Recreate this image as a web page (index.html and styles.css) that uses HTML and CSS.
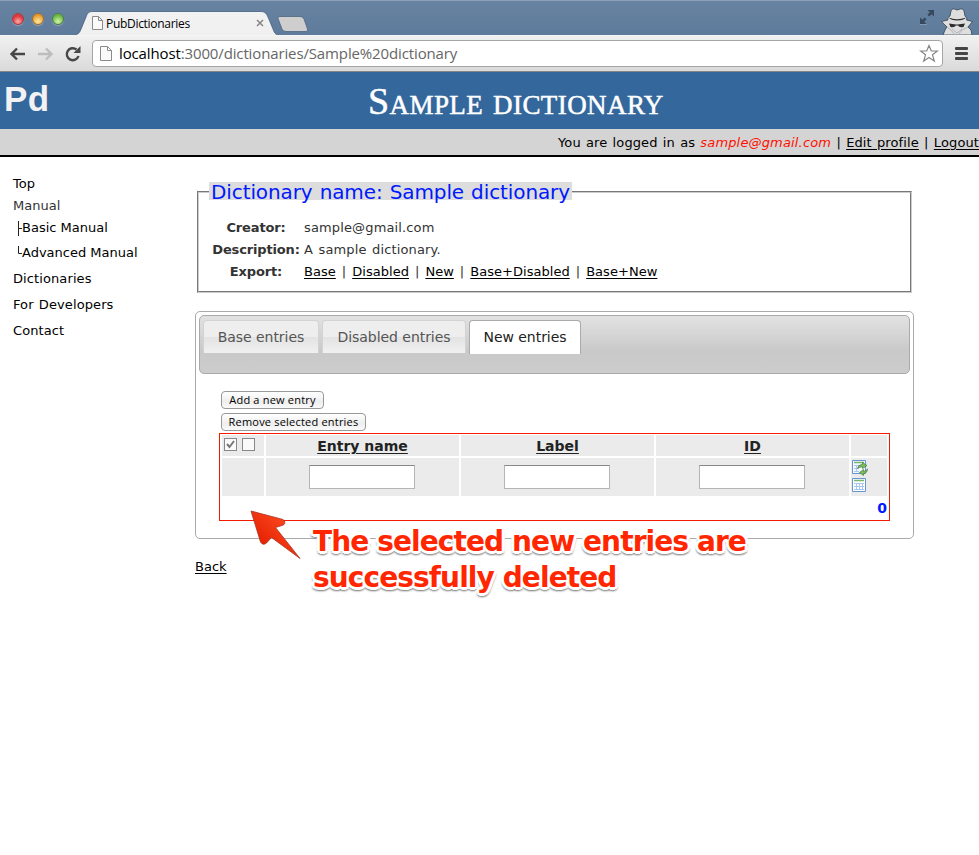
FILE: index.html
```html
<!DOCTYPE html>
<html lang="en">
<head>
<meta charset="utf-8">
<title>PubDictionaries</title>
<link rel="stylesheet" href="styles.css">
</head>
<body>
<div class="titlebar">
  <div class="lights"><i class="light red"></i><i class="light amber"></i><i class="light green"></i></div>
  <div class="browser-tab">
    <svg class="tab-shape" width="204" height="24" viewBox="0 0 204 24"><defs><linearGradient id="tabfill" x2="0" y2="1"><stop stop-color="#f2f2f2"/><stop offset="1" stop-color="#f0f0f0"/></linearGradient></defs><path d="M0 24C4 23 5 21 6.500 17L11 6C12.500 2 13.500.5 18 .5H185C190 .5 191 2 193 6L198 18C199.500 22 200 23.500 204 24" fill="url(#tabfill)" stroke="#455f7c" stroke-width=".8"/></svg>
    <svg class="page-icon" width="11" height="14" viewBox="0 0 11 14"><path d="M.5.5H6.500L10.500 4.500V13.500H.5ZM6.500.5V4.500H10.500" fill="#fafafa" stroke="#8b8b8b"/></svg>
    <span class="tab-title">PubDictionaries</span>
    <svg class="tab-close" width="8" height="8" viewBox="0 0 8 8"><path d="M1 1L7 7M7 1L1 7" stroke="#858585" stroke-width="1.500"/></svg>
  </div>
  <svg class="new-tab" width="32" height="16" viewBox="0 0 32 16"><path d="M3 .5H23Q26 .5 27 3L30.500 13Q31 15.500 29 15.500H9Q6 15.500 5 13L1 2.500Q.5.5 3 .5Z" fill="#cecece" stroke="#4d6580" stroke-width=".8"/></svg>
  <svg class="expand" width="16" height="16" viewBox="0 0 16 16"><path d="M8.500 1H15V7.500L12.700 5.200L10.300 7.600L8.400 5.700L10.800 3.300ZM1 8.500L3.300 10.800L5.700 8.400L7.600 10.300L5.200 12.700L7.500 15H1Z" fill="#37495f"/><path d="M1 15.600H8" stroke="#8fa3ba" stroke-width=".8"/></svg>
  <svg class="incognito" width="34" height="27" viewBox="0 0 34 27"><path d="M3 27L5 22L7 19L1.500 13.500L8 12Q6.500 10 10 8L11 3Q11 .8 14 .8L17 2L21 .8Q24 1 24 3L25 8Q28 10 26.500 12L32.500 13.500L28 19L31 22L32 27Z" fill="#dedede" stroke="#344356" stroke-width=".8"/><path d="M8.500 9.500Q17 13 26 9.500Q24 12.500 17 12.500Q11 12.500 8.500 9.500" fill="#343434"/><path d="M9 15.500L16 16.500L17.500 16.500L25 15.500L23.500 19Q19.500 20 18 17.500H16Q14 20 10.500 19Z" fill="#2c2c2c"/><path d="M7 19L11 22L15 27M28 19L22 22L18 27M12 21L17 25L22 21" fill="none" stroke="#b5b5b5"/></svg>
</div>
<div class="toolbar">
  <svg width="82" height="24" viewBox="0 0 82 24"><g fill="none" stroke-width="2.400"><path d="M25 12H11.500M17 6.500L11.500 12L17 17.500" stroke="#474747"/><path d="M38 12H51.500M46 6.500L51.500 12L46 17.500" stroke="#bdbdbd"/><path d="M78.500 14A6 6 0 1 1 76.500 7.500" stroke="#474747"/></g><path d="M80.500 4V11H73.500Z" fill="#474747"/></svg>
  <div class="address">
    <svg width="12" height="15" viewBox="0 0 12 15"><path d="M.5.5H7.500L11.500 4.500V14.500H.5ZM7.500.5V4.500H11.500" fill="#fafafa" stroke="#8b8b8b"/></svg>
    <span class="url"><b>localhost</b>:3000/dictionaries/Sample%20dictionary</span>
    <svg class="star" width="20" height="19" viewBox="0 0 20 19"><path d="M10 1.500L12.300 7H18.300L13.500 10.800L15.300 17L10 13.400L4.700 17L6.500 10.800L1.700 7H7.700Z" fill="#fff" stroke="#868686" stroke-width="1.200"/></svg>
  </div>
  <div class="menu"><i></i><i></i><i></i></div>
</div>
<header class="site-header"><div class="logo">Pd</div><h1>Sample dictionary</h1></header>
<div class="userbar">You are logged in as <em>sample@gmail.com</em> | <a>Edit profile</a> | <a>Logout</a></div>
<div class="page">
  <nav class="sidebar">
    <a>Top</a><span>Manual</span>
    <a class="sub"><svg width="5" height="17" viewBox="0 0 5 17"><path d="M1.500 1V16M1.500 8.500H5" stroke="#222" fill="none"/></svg>Basic Manual</a>
    <a class="sub advanced"><svg width="5" height="17" viewBox="0 0 5 17"><path d="M1.500 1V8.500H5" stroke="#222" fill="none"/></svg>Advanced Manual</a>
    <a class="wide">Dictionaries</a><a class="wide">For Developers</a><a class="wide">Contact</a>
  </nav>
  <main>
    <section class="info">
      <h2><span>Dictionary name: Sample dictionary</span></h2>
      <dl>
        <dt>Creator:</dt><dd>sample@gmail.com</dd>
        <dt>Description:</dt><dd>A sample dictionary.</dd>
        <dt>Export:</dt><dd class="exports"><a>Base</a> | <a>Disabled</a> | <a>New</a> | <a>Base+Disabled</a> | <a>Base+New</a></dd>
      </dl>
    </section>
    <section class="tabs">
      <div class="tab-nav"><a class="t1">Base entries</a><a class="t2">Disabled entries</a><a class="t3 active">New entries</a></div>
      <div class="panel">
        <button class="add">Add a new entry</button>
        <button class="remove">Remove selected entries</button>
        <div class="grid">
          <div class="cell checks"><i class="box"><svg width="11" height="11" viewBox="0 0 11 11"><path d="M2 5L4.500 8L9 2" fill="none" stroke="#777" stroke-width="2"/></svg></i><i class="box"></i></div>
          <div class="cell head"><a>Entry name</a></div><div class="cell head"><a>Label</a></div><div class="cell head"><a>ID</a></div><div class="cell"></div>
          <div class="cell"></div>
          <div class="cell field"><input aria-label="Entry name"></div><div class="cell field"><input aria-label="Label"></div><div class="cell field"><input aria-label="ID"></div>
          <div class="cell icons">
            <svg width="17" height="17" viewBox="0 0 17 17"><path d="M1.500 1.500H14.500V14.500H1.500Z" fill="#f5f9ff" stroke="#6795d4"/><path d="M3 3.500H13" stroke="#79b768" stroke-width="1.500"/><path d="M3 6.500H9M3 9.500H8M3 12.500H8M5.500 6V13" stroke="#a9c6ef"/><path d="M6.500 9.500Q7 5.500 11.500 5.500V3.500L16 6.500L11.500 9.500V7.800Q8.500 7.800 6.500 9.500ZM16.500 10Q16 14.500 12.500 14.500V16.500L8.500 13.500L12.500 10.500V12.300Q15 12.300 16.500 10Z" fill="#7fbf5c" stroke="#407c36" stroke-width=".7"/></svg>
            <svg width="17" height="17" viewBox="0 0 17 17"><path d="M1.500 1.500H14.500V14.500H1.500Z" fill="#fff" stroke="#6795d4"/><path d="M3 3.500H13" stroke="#79b768" stroke-width="1.500"/><path d="M3 6.500H13M3 9.500H13M3 12.500H13M5.500 6V13M8.500 6V13M11.500 6V13" stroke="#a9c6ef"/></svg>
          </div>
          <div class="total">0</div>
        </div>
      </div>
    </section>
    <a class="back">Back</a>
  </main>
</div>
<div class="callout">
  <svg width="56" height="54" viewBox="0 0 56 54"><defs><linearGradient id="arrowfill" x1="0" y1="1" x2="1" y2="0"><stop offset=".25" stop-color="#e52000"/><stop offset=".8" stop-color="#fb4a22"/></linearGradient></defs><path d="M3 3L35 11.500Q38.500 14 35.500 17L27.500 19.500L52 50.500L23.500 29.500L18.500 35Q15 38 12.500 34Z" fill="url(#arrowfill)" stroke="#a93320" stroke-width=".8"/></svg>
  <p><span class="line1">The selected new entries are</span><br><span class="line2">successfully deleted</span></p>
</div>
</body>
</html>
```
FILE: styles.css
```css
* { box-sizing: border-box; }
body { margin: 0; height: 855px; overflow: hidden; background: #fff; color: #333; font: 13px/22px "DejaVu Sans", sans-serif; letter-spacing: 0; }
a { color: #000; }
svg { display: block; flex: none; }
.titlebar { height: 35px; display: flex; align-items: flex-start; border-top: 1px solid #8ba1b9; background: linear-gradient(#6883a2, #5e7b9b); }
.lights { display: flex; gap: 8px; padding: 12px 0 0 12px; width: 76px; }
.light { width: 12px; height: 12px; border-radius: 50%; border: 1px solid; box-shadow: 0 1px 1px #91a5bb; }
.red { background: radial-gradient(circle at 50% 75%, #ffaca5, #dd3b40 60%); border-color: #a83b45; }
.amber { background: radial-gradient(circle at 50% 75%, #ffeb9e, #e69b2e 70%); border-color: #a66e31; }
.green { background: radial-gradient(circle at 50% 75%, #d3f4a8, #69b545 70%); border-color: #4d8245; }
.browser-tab { width: 200px; height: 24px; margin-top: 10px; display: grid; grid-template-columns: 14px 1fr 20px; align-items: center; padding-left: 16px; }
.tab-shape { grid-area: 1 / 1 / 2 / 4; margin-left: -17px; align-self: start; }
.page-icon { grid-area: 1 / 1; }
.tab-title { grid-area: 1 / 2; padding-top: 1px; font: 12px/16px "Open Sans", sans-serif; color: #000; letter-spacing: -.3px; white-space: nowrap; }
.tab-close { grid-area: 1 / 3; }
.browser-tab .tab-close { margin-left: 0; transform: translateX(-3px); }
.new-tab { margin: 15px 0 0 1px; }
.expand { margin: 8px 5px 0 auto; }
.incognito { margin: 7px 5px 0 0; }
.toolbar { height: 37px; display: flex; align-items: center; background: linear-gradient(#f1f1f1, #dadada); border-top: 1px solid #f5f5f5; border-bottom: 1px solid #858585; }
.address { width: 851px; height: 27px; margin-left: 10px; padding: 0 3px 0 7px; display: flex; align-items: center; border: 1px solid #a5a5a5; border-radius: 4px; background: #fff; }
.url { margin: -2px 0 0 7px; font: 15px/22px "Open Sans", sans-serif; letter-spacing: -.13px; color: #666; white-space: nowrap; }
.url b { color: #000; font-weight: 400; }
.star { margin-left: auto; }
.menu { width: 13px; margin-left: 12px; display: grid; gap: 2px; }
.menu i { height: 3px; border-radius: 1px; background: #454545; }
.site-header { height: 57px; display: flex; background: #34689c; color: #fff; }
.logo { width: 368px; padding-left: 4px; font: bold 35px/53px "Liberation Sans", sans-serif; letter-spacing: .5px; color: #f2f2f4; }
h1 { margin: 0; font: 38px/58px "Liberation Serif", serif; font-variant: small-caps; letter-spacing: .42px; -webkit-text-stroke: .5px #fff; white-space: nowrap; }
.userbar { height: 28px; border-bottom: 2px solid #000; background: #d4d4d4; color: #000; text-align: right; line-height: 27px; word-spacing: 1px; letter-spacing: .11px; white-space: nowrap; }
.userbar em { color: #f10; letter-spacing: .16px; }
.userbar a, dd a, .head a, .back { text-decoration: underline; text-underline-offset: 2px; }
.page { display: flex; }
.sidebar { width: 195px; padding: 16px 0 0 13px; display: flex; flex-direction: column; }
.sidebar .sub { display: flex; align-items: center; padding-left: 4px; }
.sidebar .advanced { height: 28px; }
.sidebar .wide { height: 26px; line-height: 23px; letter-spacing: .1px; word-spacing: 1px; }
main { width: 719px; padding-top: 26px; }
.info { width: 715px; height: 102px; margin: 8px 0 18px 2px; border: 2px groove #ccc; padding-left: 10px; }
h2 { margin: -11px 0 0; height: 21px; font: 20px/20px "DejaVu Sans", sans-serif; color: #0018ff; white-space: nowrap; }
h2 span { display: inline-block; width: 363px; height: 18px; padding-left: 2px; background: #ddd; line-height: 20px; letter-spacing: -.1px; word-spacing: .8px; }
dl { margin: 14px 0 0; display: grid; grid-template-columns: 95px 1fr; }
dt { width: 91px; padding-left: 3px; font-weight: 700; letter-spacing: -.15px; white-space: nowrap; display: flex; justify-content: center; }
dd { margin: 0; letter-spacing: .14px; word-spacing: 1.200px; }
.exports { letter-spacing: .04px; word-spacing: 1.800px; }
.tabs { height: 228px; border: 1px solid #aaa; border-radius: 5px; padding: 3px; }
.tab-nav { height: 59px; display: flex; align-items: flex-start; gap: 3px; padding: 4px 3px; border: 1px solid #aaa; border-radius: 5px; background: linear-gradient(#e2e2e2, #c9c9c9 62%, #ccc); }
.tab-nav a { height: 33px; border: 1px solid #d3d3d3; border-bottom: 0; border-radius: 4px 4px 0 0; background: linear-gradient(#eee 50%, #e3e3e3 51%, #f0f0f0); font-size: 14px; letter-spacing: -.05px; line-height: 33px; text-align: center; color: #555; white-space: nowrap; }
.tab-nav .t1 { width: 116px; }
.tab-nav .t2 { width: 144px; }
.tab-nav .t3 { width: 112px; height: 34px; border-color: #aaa; background: #fff; color: #212121; }
.panel { padding: 17px 20px 0; display: flex; flex-direction: column; align-items: flex-start; }
button { height: 18px; margin: 0 0 4px 2px; padding: 0 0 1px; border: 1px solid #999; border-radius: 4px; background: linear-gradient(#fff, #eee 60%, #fafafa); color: #000; font: 11px/15px "Open Sans", sans-serif; letter-spacing: .2px; white-space: nowrap; }
.add { width: 103px; }
.remove { width: 145px; margin-bottom: 2px; }
.grid { width: 671px; height: 88px; padding: 1px; border: 1px solid #f31a00; display: grid; grid-template-columns: 42px 193px 193px 193px 36px; grid-template-rows: 21px 38px 22px; gap: 2px; padding-left: 2px; }
.cell { background: #ebebeb; }
.checks { display: flex; gap: 5px; padding: 3px 2px; }
.box { width: 13px; height: 13px; border: 1px solid #888; background: #fafafa; }
.head { text-align: center; font-weight: 700; font-size: 14px; line-height: 23px; }
.head a { color: #222; }
.field { display: flex; align-items: center; justify-content: center; padding-right: 2px; }
input { width: 106px; height: 24px; border: 1px solid #b5b5b5; border-top-color: #888; background: #fff; padding: 0; }
.icons { padding-top: 1px; display: grid; align-content: start; gap: 1px; }
.total { grid-column: 1 / 6; text-align: right; color: #001aff; font-size: 14px; font-weight: 700; line-height: 20px; }
.back { display: inline-block; margin-top: 17px; }
.callout { position: absolute; left: 248px; top: 508px; display: flex; }
.callout p { margin: 16px 0 0 9px; font: bold 28px/36px "DejaVu Sans", sans-serif; letter-spacing: -.9px; color: #ff2600; white-space: nowrap; text-shadow: -3px 0 #fff, 3px 0 #fff, 0 -3px #fff, 0 3px #fff, -2px -2px #fff, 2px -2px #fff, -2px 2px #fff, 2px 2px #fff, 0 4px 2px #888, 2px 3px 2px #888, -2px 3px 2px #888; }
```
